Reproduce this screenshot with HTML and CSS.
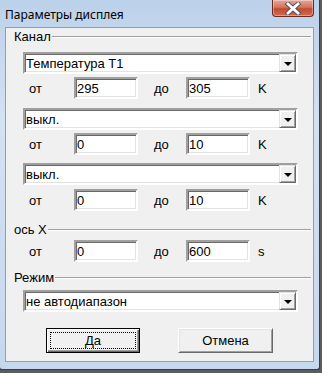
FILE: index.html
```html
<!DOCTYPE html>
<html lang="ru">
<head>
    <meta charset="UTF-8">
    <meta name="viewport" content="width=device-width, initial-scale=1.0">
    <title>Параметры дисплея</title>
    <link rel="stylesheet" href="styles.css">
</head>
<body>
    <div class="window">
        <div class="titlebar">
            <span class="title">Параметры дисплея</span>
            <button class="close" aria-label="Закрыть">
                <svg width="20" height="13" viewBox="0 0 20 13">
                    <path d="M5 2 L15 11 M15 2 L5 11" stroke="#4a4f5a" stroke-width="4.6" stroke-linecap="square"/>
                    <path d="M5 2 L15 11 M15 2 L5 11" stroke="#ffffff" stroke-width="2.8" stroke-linecap="square"/>
                </svg>
            </button>
        </div>

        <div class="client">
            <div class="legend legend-first"><span>Канал</span><i></i></div>

            <div class="select sel-1"><span>Температура Т1</span><b class="arrow"></b></div>
            <div class="range row-1">
                <span class="from">от</span>
                <div class="edit">295</div>
                <span class="to">до</span>
                <div class="edit">305</div>
                <span class="unit">K</span>
            </div>

            <div class="select sel-2"><span>выкл.</span><b class="arrow"></b></div>
            <div class="range row-2">
                <span class="from">от</span>
                <div class="edit">0</div>
                <span class="to">до</span>
                <div class="edit">10</div>
                <span class="unit">K</span>
            </div>

            <div class="select sel-3"><span>выкл.</span><b class="arrow"></b></div>
            <div class="range row-3">
                <span class="from">от</span>
                <div class="edit">0</div>
                <span class="to">до</span>
                <div class="edit">10</div>
                <span class="unit">K</span>
            </div>

            <div class="legend legend-x"><span>ось X</span><i></i></div>
            <div class="range row-4">
                <span class="from">от</span>
                <div class="edit">0</div>
                <span class="to">до</span>
                <div class="edit">600</div>
                <span class="unit">s</span>
            </div>

            <div class="legend legend-mode"><span>Режим</span><i></i></div>
            <div class="select sel-4"><span>не автодиапазон</span><b class="arrow"></b></div>

            <div class="buttons">
                <button class="btn btn-default"><span>Да</span></button>
                <button class="btn">Отмена</button>
            </div>
        </div>
    </div>
</body>
</html>
```

FILE: styles.css
```css
body {
    margin: 0;
    padding: 0;
    background: #5c5c5c;
    font-family: 'Liberation Sans', Arial, sans-serif;
    font-size: 13px;
    color: #000000;
}

.window {
    width: 321px;
    height: 370px;
    box-sizing: border-box;
    margin-left: -1px;
    padding: 0 5px 0 5px;
    background: linear-gradient(to bottom, #bcd1ea 0, #d3e1f2 120px, #c6d8ee 100%);
    border: 1px solid #2f3f55;
    border-top: none;
    border-radius: 0 0 3px 3px;
    display: flex;
    flex-direction: column;
}

.titlebar {
    height: 27px;
    display: flex;
    justify-content: space-between;
    align-items: flex-start;
}

.title {
    font-family: 'Noto Sans', 'Open Sans', sans-serif;
    font-size: 12px;
    line-height: 12px;
    margin-top: 9px;
    color: #000000;
}

.close {
    width: 42px;
    height: 17px;
    margin-right: 0;
    padding: 0;
    border: 1px solid #6b2b22;
    border-top: none;
    border-radius: 0 0 4px 4px;
    background: linear-gradient(to bottom, #e7a799 0, #d3735f 45%, #c14b33 55%, #d26a4f 100%);
    box-shadow: inset 0 0 0 1px rgba(255, 255, 255, 0.35);
    display: flex;
    align-items: center;
    justify-content: center;
}

.client {
    flex: 1;
    margin-bottom: 7px;
    background: #f0f0f0;
    border: 1px solid #8d9fb5;
    padding: 0 0 0 8px;
}

/* group captions with an etched line */
.legend {
    display: flex;
    align-items: center;
    height: 15px;
    width: 297px;
}

.legend span {
    padding-right: 1px;
}

.legend i {
    flex: 1;
    border-top: 1px solid #a0a0a0;
    border-bottom: 1px solid #ffffff;
}

.legend-first { margin-top: 1px; }
.legend-x { margin-top: 11px; }
.legend-mode { margin-top: 8px; }

/* combo boxes */
.select {
    width: 275px;
    height: 22px;
    box-sizing: border-box;
    margin-left: 9px;
    background: #ffffff;
    border-style: solid;
    border-width: 2px;
    border-color: #a0a0a0 #ffffff #ffffff #a0a0a0;
    box-shadow: inset 1px 1px 0 #696969, inset -1px -1px 0 #e3e3e3;
    display: flex;
    align-items: center;
    justify-content: space-between;
}

.select span {
    padding-left: 1px;
}

.arrow {
    width: 17px;
    height: 18px;
    box-sizing: border-box;
    margin-right: 0;
    background: #f0f0f0;
    border-style: solid;
    border-width: 1px;
    border-color: #e3e3e3 #696969 #696969 #e3e3e3;
    box-shadow: inset 1px 1px 0 #ffffff, inset -1px -1px 0 #a0a0a0;
    display: flex;
    align-items: center;
    justify-content: center;
}

.arrow::after {
    content: "";
    border-left: 4px solid transparent;
    border-right: 4px solid transparent;
    border-top: 4px solid #000000;
    margin-top: 1px;
}

.sel-1 { margin-top: 8px; }
.sel-2 { margin-top: 9px; }
.sel-3 { margin-top: 8px; }
.sel-4 { margin-top: 5px; }

/* from / to rows */
.range {
    display: flex;
    align-items: center;
    margin-left: 9px;
    height: 22px;
}

.row-1 { margin-top: 3px; }
.row-2 { margin-top: 3px; }
.row-3 { margin-top: 4px; }
.row-4 { margin-top: 3px; }

.from {
    width: 45px;
    padding-left: 6px;
}

.to {
    width: 32px;
    padding-left: 16px;
}

.unit {
    padding-left: 8px;
}

.edit {
    width: 64px;
    height: 22px;
    box-sizing: border-box;
    padding-left: 1px;
    background: #ffffff;
    border-style: solid;
    border-width: 2px;
    border-color: #a0a0a0 #ffffff #ffffff #a0a0a0;
    box-shadow: inset 1px 1px 0 #696969, inset -1px -1px 0 #e3e3e3;
    display: flex;
    align-items: center;
}

/* dialog buttons */
.buttons {
    display: flex;
    gap: 38px;
    margin-top: 16px;
    padding-left: 32px;
}

.btn {
    width: 95px;
    height: 25px;
    padding: 0;
    font-family: 'Liberation Sans', Arial, sans-serif;
    font-size: 13px;
    color: #000000;
    background: #f0f0f0;
    border-style: solid;
    border-width: 1px;
    border-color: #ffffff #696969 #696969 #ffffff;
    box-shadow: inset 1px 1px 0 #e3e3e3, inset -1px -1px 0 #a0a0a0;
}

.btn-default {
    width: 94px;
    border: 1px solid #000000;
    box-shadow: inset 1px 1px 0 #ffffff, inset -1px -1px 0 #696969, inset -2px -2px 0 #a0a0a0;
    display: flex;
    padding: 3px;
}

.btn-default span {
    flex: 1;
    border: 1px dotted #000000;
    display: flex;
    align-items: center;
    justify-content: center;
}
```
